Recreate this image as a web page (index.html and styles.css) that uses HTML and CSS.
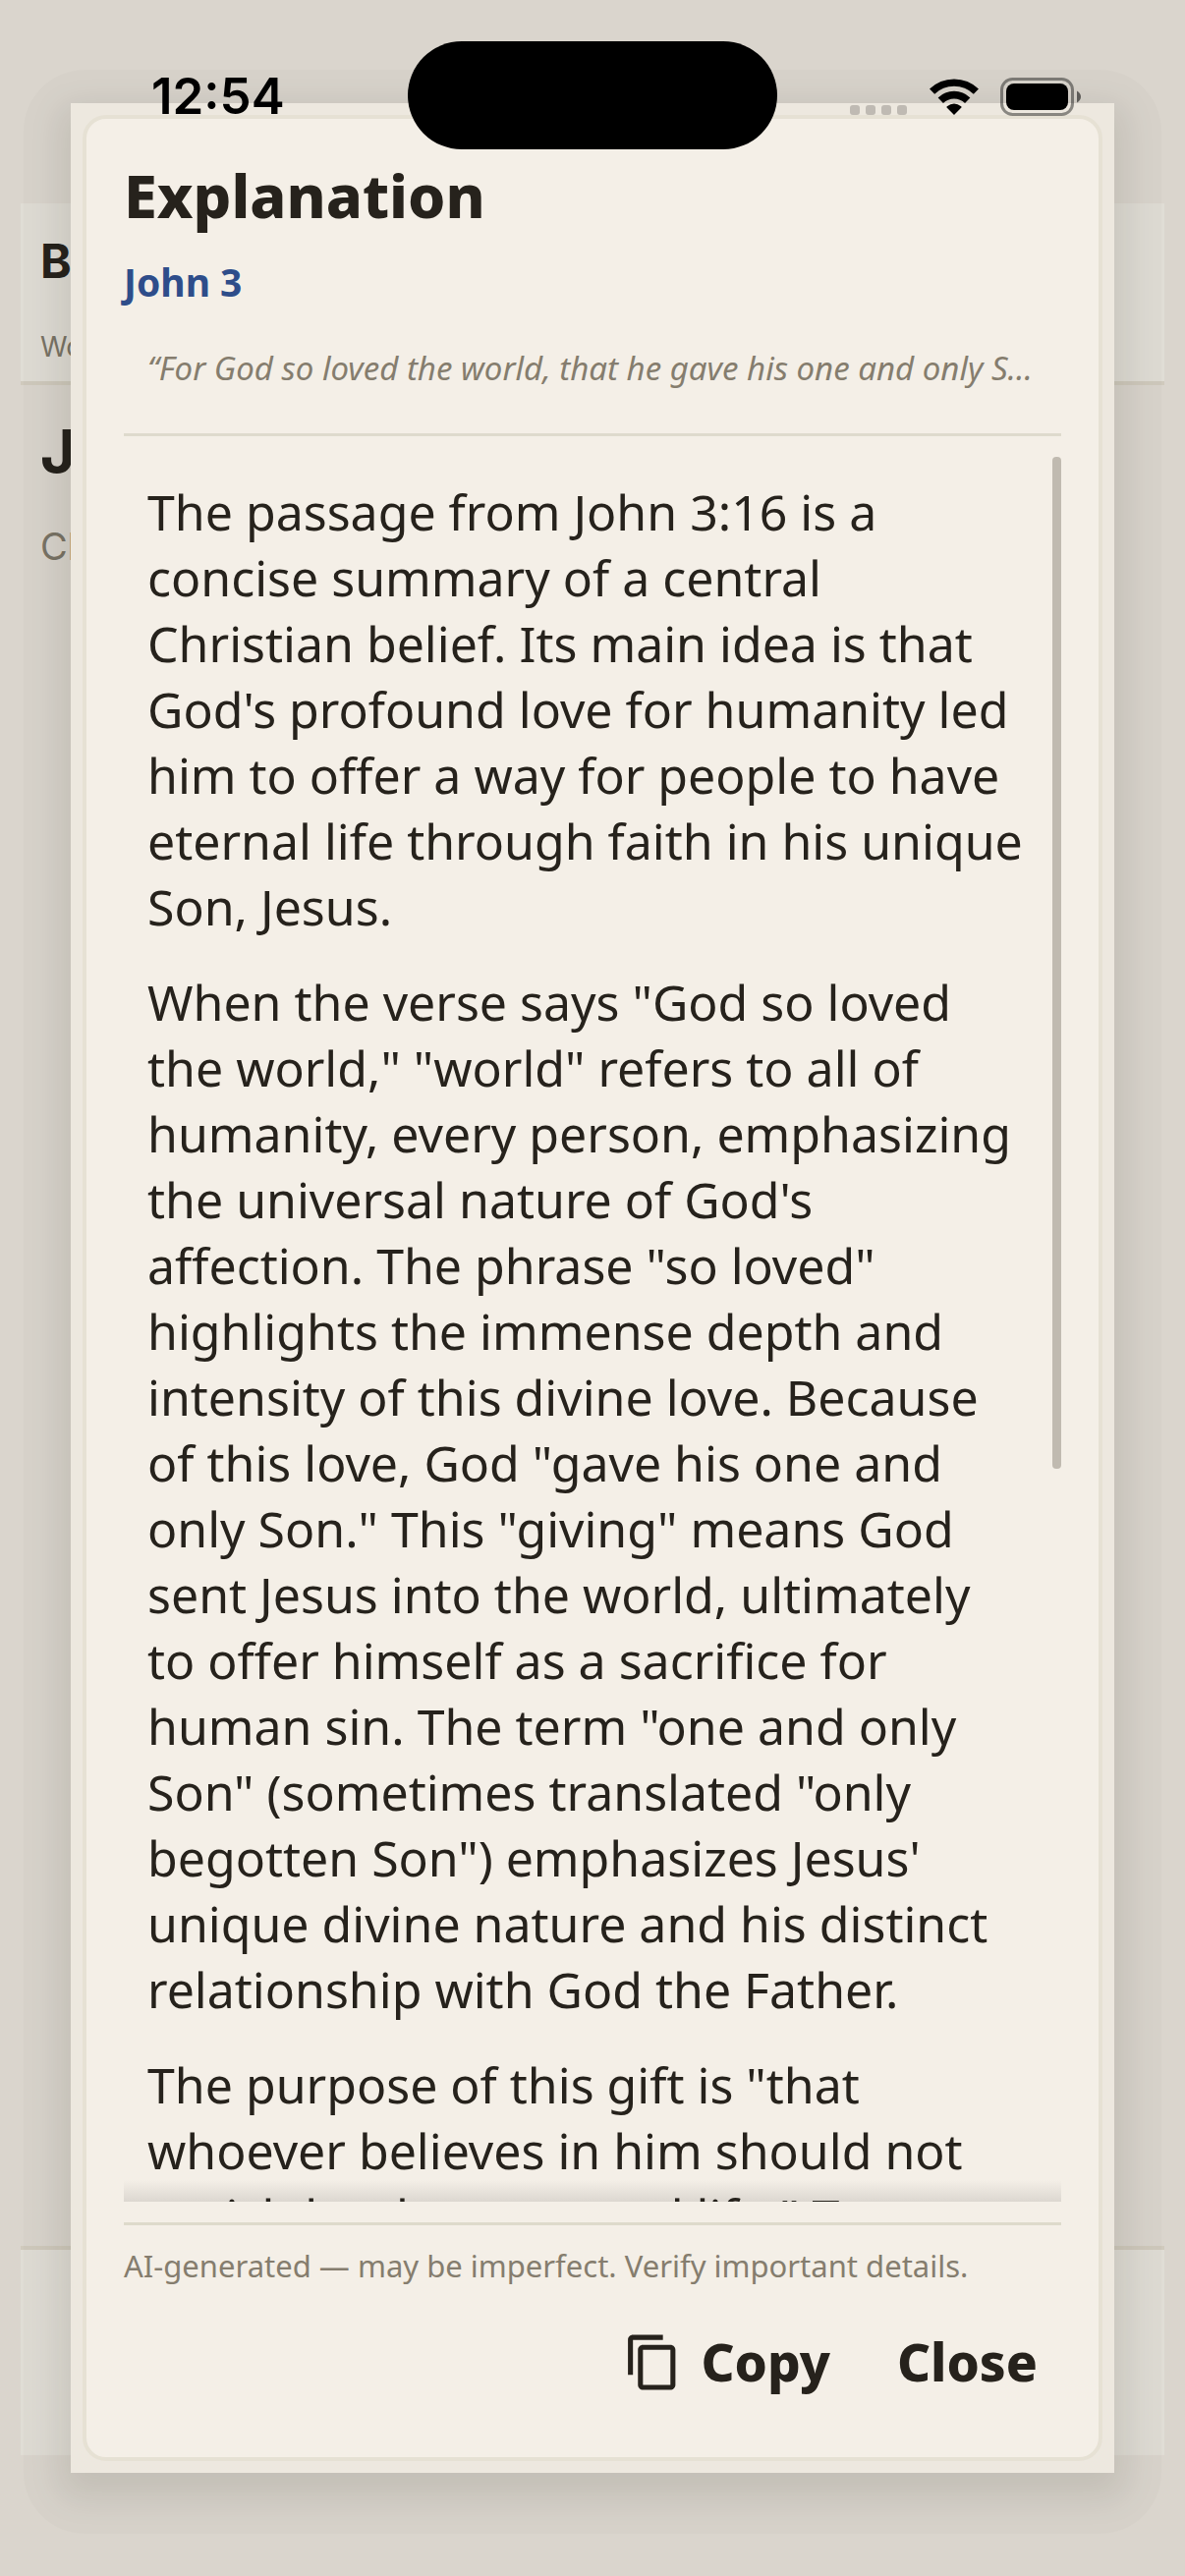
FILE: index.html
```html
<!DOCTYPE html>
<html lang="en">
<head>
    <meta charset="UTF-8">
    <meta name="viewport" content="width=device-width, initial-scale=1.0">
    <title>Explanation - John 3</title>
    <link rel="stylesheet" href="styles.css">
</head>
<body>
    <!-- Reader page behind the dialog -->
    <div class="page">
        <header class="page-header">
            <p class="app-name">B</p>
            <p class="version">Wo</p>
        </header>
        <main class="page-content">
            <h1>J</h1>
            <p>Ch</p>
        </main>
        <footer class="page-footer"></footer>
    </div>

    <div class="overlay">
        <div class="dialog" role="dialog" aria-labelledby="dialog-title">
            <div class="card">
                <h2 id="dialog-title">Explanation</h2>
                <p class="reference">John 3</p>
                <p class="quote">“For God so loved the world, that he gave his one and only S…</p>

                <div class="scroll">
                    <div class="scroll-text">
                        <p>The passage from John 3:16 is a concise summary of a central Christian belief. Its main idea is that God's profound love for humanity led him to offer a way for people to have eternal life through faith in his unique Son, Jesus.</p>
                        <p>When the verse says "God so loved the world," "world" refers to all of humanity, every person, emphasizing the universal nature of God's affection. The phrase "so loved" highlights the immense depth and intensity of this divine love. Because of this love, God "gave his one and only Son." This "giving" means God sent Jesus into the world, ultimately to offer himself as a sacrifice for human sin. The term "one and only Son" (sometimes translated "only begotten Son") emphasizes Jesus' unique divine nature and his distinct relationship with God the Father.</p>
                        <p>The purpose of this gift is "that whoever believes in him should not perish but have eternal life." To</p>
                    </div>
                    <div class="scroll-fade"></div>
                    <div class="scroll-thumb"></div>
                </div>

                <p class="disclaimer">AI-generated — may be imperfect. Verify important details.</p>
                <div class="actions">
                    <button class="btn" type="button">
                        <svg class="copy-icon" viewBox="0 0 24 24" aria-hidden="true">
                            <path d="M16 1H4c-1.1 0-2 .9-2 2v14h2V3h12V1zm3 4H8c-1.1 0-2 .9-2 2v14c0 1.1.9 2 2 2h11c1.1 0 2-.9 2-2V7c0-1.1-.9-2-2-2zm0 16H8V7h11v14z"/>
                        </svg>
                        Copy
                    </button>
                    <button class="btn" type="button">Close</button>
                </div>
            </div>
        </div>
    </div>

    <!-- Phone status bar -->
    <div class="status-bar">
        <span class="time">12:54</span>
        <div class="status-icons">
            <svg width="59" height="39" viewBox="0 0 59 39" aria-hidden="true">
                <g fill="#bfbab3">
                    <rect x="0" y="28" width="10" height="10" rx="3"/>
                    <rect x="16" y="28" width="10" height="10" rx="3"/>
                    <rect x="32" y="28" width="10" height="10" rx="3"/>
                    <rect x="48" y="28" width="10" height="10" rx="3"/>
                </g>
            </svg>
            <svg width="50" height="39" viewBox="0 0 50 39" aria-hidden="true">
                <g fill="none" stroke="#000">
                    <path stroke-width="7.4" d="M2.6 14.2A32.3 32.3 0 0 1 47.4 14.2"/>
                    <path stroke-width="7.6" d="M11.3 23.2A19.6 19.6 0 0 1 38.7 23.2"/>
                </g>
                <path d="M25 38L17.6 30.6Q17 29.8 17.8 29.2Q25 23.8 32.2 29.2Q33 29.8 32.4 30.6Z"/>
            </svg>
            <svg width="83" height="39" viewBox="0 0 83 39" aria-hidden="true">
                <rect x="1.5" y="1.5" width="72" height="36" rx="11" fill="none" stroke="#000" stroke-opacity=".42" stroke-width="3"/>
                <rect x="6" y="6" width="63" height="27" rx="8"/>
                <path fill-opacity=".55" d="M78 13.500Q82 16 82 19.500Q82 23 78 25.500Z"/>
            </svg>
        </div>
    </div>
    <div class="island"></div>
</body>
</html>
```
FILE: styles.css
```css
* {
    box-sizing: border-box;
}
body {
    margin: 0;
    background-color: #dad5cd;
    color: #26221c;
    font-family: "Noto Sans", "Open Sans", sans-serif;
}
h1, h2, p {
    margin: 0;
}

/* Page behind */
.page {
    display: flex;
    flex-direction: column;
    min-height: 100vh;
    padding: 207px 21px 123px;
    font-family: Inter, sans-serif;
}
.page-header {
    padding: 26px 20px 16px;
    background-color: #e0ddd5;
    border-bottom: 4px solid #d0cabd;
}
.app-name {
    font-size: 48px;
    line-height: 66px;
    font-weight: bold;
}
.version {
    margin-top: 35px;
    font-size: 28px;
    line-height: 38px;
    color: #7a7466;
}
.page-content {
    flex: 1;
    padding: 25px 20px;
}
.page-content h1 {
    font-size: 61px;
    line-height: 84px;
}
.page-content p {
    margin-top: 29px;
    font-size: 38px;
    line-height: 52px;
    color: #7a7466;
}
.page-footer {
    height: 213px;
    background-color: #e0ddd5;
    border-top: 4px solid #d0cabd;
}

/* Dialog */
.overlay {
    position: fixed;
    inset: 71px 24px 43px;
    display: flex;
    padding: 34px 48px 62px;
    border-radius: 62px;
    background-color: rgba(20, 18, 10, 0.015);
}
.dialog {
    flex: 1;
    min-width: 0;
    display: flex;
    padding: 12px;
    background-color: #ede8df;
    box-shadow: 0 14px 36px 12px rgba(20, 18, 10, 0.1);
}
.card {
    flex: 1;
    min-width: 0;
    display: flex;
    flex-direction: column;
    padding: 42px 38px 61px;
    background-color: #f4efe7;
    border: 4px solid #e6e1d4;
    border-radius: 24px;
}
.card h2 {
    font-size: 61px;
    line-height: 72px;
    font-weight: 800;
}
.reference {
    margin-top: 25px;
    font-size: 39px;
    line-height: 54px;
    font-weight: bold;
    color: #2e4d8a;
}
.quote {
    margin-top: 38px;
    padding: 0 24px 43px;
    border-bottom: 3px solid #dedacd;
    font-size: 33px;
    line-height: 46px;
    font-style: italic;
    color: #857d6e;
    white-space: nowrap;
}
.scroll {
    position: relative;
    flex: 1;
    min-height: 0;
    margin: 21px 0;
    overflow: hidden;
}
.scroll-text {
    position: relative;
    z-index: 1;
    padding: 23px 36px 0 24px;
    font-size: 50px;
    line-height: 67px;
}
.scroll-text p + p {
    margin-top: 30px;
}
.scroll-fade {
    position: absolute;
    left: 0;
    right: 0;
    bottom: 0;
    height: 22px;
    background: linear-gradient(rgba(220, 215, 208, 0), #dcd7d0);
}
.scroll-thumb {
    position: absolute;
    top: 0;
    right: 0;
    width: 9px;
    height: 58%;
    border-radius: 4px;
    background-color: #c0bab0;
}
.disclaimer {
    padding-top: 19px;
    border-top: 3px solid #dedacb;
    font-size: 31px;
    line-height: 44px;
    color: #857d6e;
}
.actions {
    display: flex;
    justify-content: flex-end;
    gap: 20px;
    margin-top: 40px;
}
.btn {
    display: flex;
    align-items: center;
    gap: 18px;
    padding: 0 24px;
    border: none;
    background: none;
    color: inherit;
    font-family: inherit;
    font-size: 53px;
    line-height: 72px;
    font-weight: 800;
    cursor: pointer;
}
.copy-icon {
    width: 61px;
    height: 61px;
    fill: currentColor;
}

/* Status bar */
.status-bar {
    position: fixed;
    top: 68px;
    left: 0;
    right: 0;
    display: flex;
    justify-content: space-between;
    align-items: center;
    padding: 0 105px 0 154px;
    color: #000;
}
.time {
    font-family: Inter, sans-serif;
    font-size: 51px;
    line-height: 60px;
    font-weight: 600;
}
.status-icons {
    display: flex;
    gap: 22px;
}
.island {
    position: fixed;
    top: 42px;
    left: 50%;
    width: 376px;
    height: 110px;
    margin-left: -188px;
    border-radius: 55px;
    background-color: #000;
}
```
